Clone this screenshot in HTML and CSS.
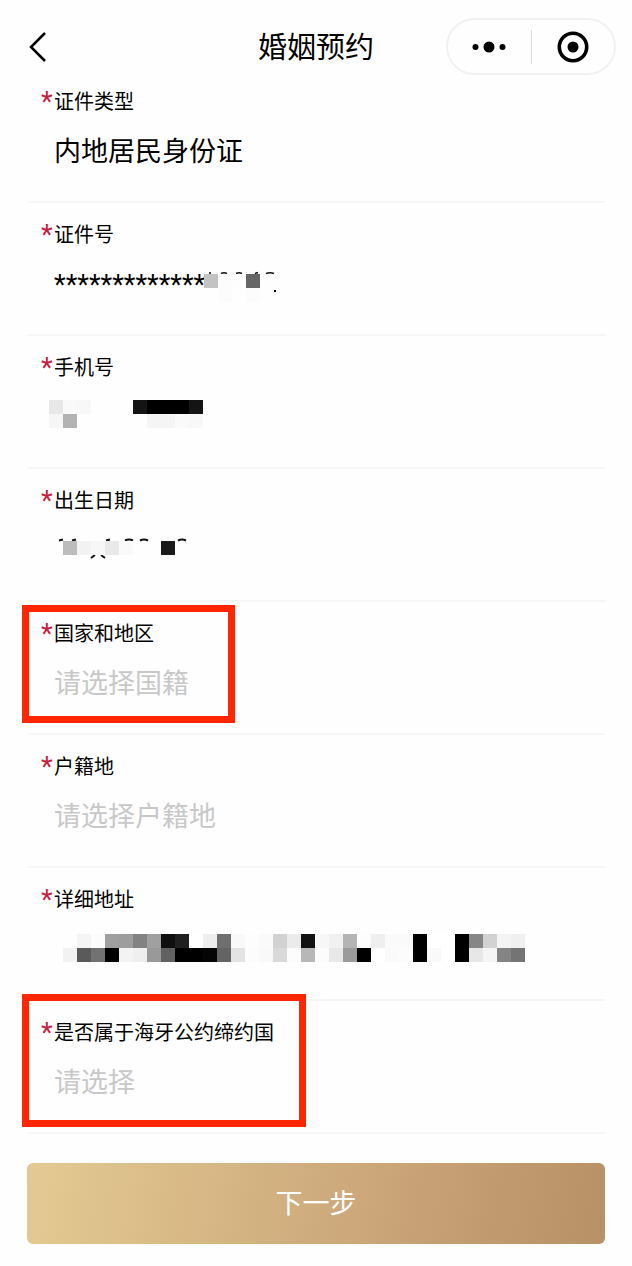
FILE: index.html
```html
<!DOCTYPE html>
<html lang="zh-CN">
<head>
    <meta charset="UTF-8">
    <meta name="viewport" content="width=device-width, initial-scale=1.0">
    <title>婚姻预约</title>
    <link rel="stylesheet" href="styles.css">
</head>
<body>
    <header class="nav">
        <button class="back" type="button" aria-label="返回">
            <svg width="20" height="32" viewBox="0 0 20 32"><path d="M17 2L3 16L17 30" fill="none" stroke="#000" stroke-width="2.500"/></svg>
        </button>
        <h1>婚姻预约</h1>
        <div class="capsule">
            <button type="button" aria-label="更多">
                <svg width="34" height="12" viewBox="0 0 34 12"><circle cx="3.500" cy="6" r="3"/><circle cx="17" cy="6" r="5.500"/><circle cx="30.500" cy="6" r="3"/></svg>
            </button>
            <button type="button" aria-label="关闭">
                <svg width="32" height="32" viewBox="0 0 32 32"><circle cx="16" cy="16" r="13.700" fill="none" stroke="#000" stroke-width="3.600"/><circle cx="16" cy="16" r="5.500"/></svg>
            </button>
        </div>
    </header>

    <form class="form">
        <div class="field">
            <label for="idType">证件类型</label>
            <select id="idType"><option>内地居民身份证</option></select>
        </div>
        <div class="field">
            <label for="idNo">证件号</label>
            <input id="idNo" type="text" value="*************" readonly>
            <svg class="mosaic" data-rows="176,11:c3 fc fd 66|190,25:fc - fc">
                <path d="M181 10h2M193 10.500q3-1.500 6 0M208 10.500q3-1.500 6 0M227 10.500l3-1M238 10.500q4-1.500 8 0" fill="none" stroke="#111" stroke-width="1.500"/>
                <rect x="246" y="27" width="2" height="2"/>
            </svg>
        </div>
        <div class="field">
            <label for="phone">手机号</label>
            <input id="phone" type="text" readonly>
            <svg class="mosaic" data-rows="21,4:e8 f9 f8|21,18:f6 b3|105,4:14 00 00 00 14|119,18:f5 f5 fa f8"></svg>
        </div>
        <div class="field">
            <label for="birthday">出生日期</label>
            <input id="birthday" type="text" readonly>
            <svg class="mosaic" data-rows="35,12:bc f2 f7 e9 fa - - 1a">
                <path d="M31 11.500l4-1M44 11.500l4-1M78 11.500l4-1M97 11.500q4-2 8 0M112 11.500q4-2 8 0M150 11.500q4-2 8 0M67 26l-4 3M73 26l4 3" fill="none" stroke="#111" stroke-width="2"/>
            </svg>
        </div>
        <div class="field">
            <label for="country">国家和地区</label>
            <select id="country" class="empty"><option>请选择国籍</option></select>
            <span class="mark mark-country"></span>
        </div>
        <div class="field">
            <label for="household">户籍地</label>
            <select id="household" class="empty"><option>请选择户籍地</option></select>
        </div>
        <div class="field">
            <label for="address">详细地址</label>
            <input id="address" type="text" readonly>
            <svg class="mosaic" data-rows="49,6:f5 fc 9f 9d 82 a0 0f 1f ff ee 6f f9 fd fa d2 eb 12 f7 f1 b4 fd ef fa fa 00 ff ff 00 86 d2 f4 f0|35,20:f2 5a 72 00 f3 ef 99 61 00 00 05 64 e3 fc f9 d9 fc b7 fc e8 9b 00 ff fa fc 00 f9 ff 00 e7 f5 84 74"></svg>
        </div>
        <div class="field">
            <label for="hague">是否属于海牙公约缔约国</label>
            <select id="hague" class="empty"><option>请选择</option></select>
            <span class="mark mark-hague"></span>
        </div>
        <button class="next" type="submit">下一步</button>
    </form>

    <script>
        // data-rows: "x,y:灰度 灰度 ..."，每格 14px，"-" 为空格
        const size = 14;
        document.querySelectorAll(".mosaic").forEach(svg => {
            svg.dataset.rows.split("|").forEach(row => {
                const [pos, cells] = row.split(":");
                const [x, y] = pos.split(",").map(Number);
                cells.split(" ").forEach((c, i) => {
                    if (c === "-") return;
                    const rect = document.createElementNS("http://www.w3.org/2000/svg", "rect");
                    rect.setAttribute("x", x + i * size);
                    rect.setAttribute("y", y);
                    rect.setAttribute("width", size);
                    rect.setAttribute("height", size);
                    rect.setAttribute("fill", "#" + c + c + c);
                    svg.appendChild(rect);
                });
            });
        });
    </script>
</body>
</html>
```
FILE: styles.css
```css
* {
    box-sizing: border-box;
}
body {
    margin: 0;
    background-color: #fefefe;
    color: #000;
    font-family: Roboto, "Noto Sans CJK SC", sans-serif;
}
button {
    padding: 0;
    border: none;
    background: none;
    font-family: inherit;
}
svg {
    display: block;
}
.nav {
    display: grid;
    grid-template-columns: 1fr auto 1fr;
    align-items: center;
    padding: 18px 16px 0 28px;
}
.back {
    justify-self: start;
}
.nav h1 {
    margin: 0;
    padding: 3px 12px 0 0;
    font-size: 29px;
    line-height: 40px;
    font-weight: 400;
}
.capsule {
    justify-self: end;
    display: flex;
    align-items: center;
    width: 170px;
    height: 57px;
    border: 2px solid #f1f1f1;
    border-radius: 29px;
}
.capsule button {
    flex: 1;
    height: 34px;
    display: flex;
    align-items: center;
    justify-content: center;
}
.capsule button + button {
    border-left: 1px solid #ddd;
}
.form {
    margin-top: -5px;
    padding: 0 27px 22px 27px;
}
.field {
    position: relative;
    height: 133px;
    margin-left: 1px;
    padding: 20px 0 0 13px;
    border-bottom: 2px solid #f6f6f6;
}
.field label {
    display: flex;
    font-size: 20px;
    line-height: 24px;
}
.field label::before {
    content: "*";
    width: 13px;
    height: 24px;
    color: #c8203c;
    font-size: 27px;
    line-height: 24px;
}
.field select,
.field input {
    display: block;
    appearance: none;
    width: 100%;
    height: 36px;
    margin-top: 20px;
    padding: 0 0 0 13px;
    border: none;
    outline: none;
    background: none;
    color: #000;
    font-family: inherit;
    font-size: 27px;
    opacity: 1;
}
.field .empty {
    color: #c8c8c8;
}
.mosaic {
    position: absolute;
    left: 0;
    top: 60px;
    width: 100%;
    height: 50px;
}
.mark {
    position: absolute;
    left: -6px;
    border: 7px solid #ff2600;
    pointer-events: none;
}
.mark-country {
    top: 3px;
    width: 213px;
    height: 118px;
}
.mark-hague {
    top: -7px;
    width: 284px;
    height: 133px;
}
.next {
    display: block;
    width: 100%;
    height: 81px;
    margin-top: 29px;
    padding-bottom: 4px;
    border-radius: 6px;
    background: linear-gradient(100deg, #e4ca92, #d3b282 40%, #c29a70 80%, #b99167);
    color: #fff;
    font-size: 27px;
}
```
